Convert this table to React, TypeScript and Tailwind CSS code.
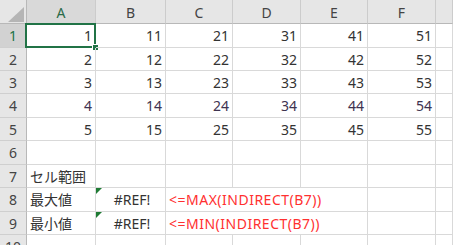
import type { ReactNode } from "react";

const COLS = ["A", "B", "C", "D", "E", "F", ""];
const GRID = "grid grid-cols-[27px_69px_70px_67px_68px_67px_68px_1fr]";
const FONT = "font-['Noto_Sans','Noto_Sans_CJK_JP',sans-serif]";

type Row = { n: number; h: string; vals?: (number | null)[]; purple?: boolean };

const ROWS: Row[] = [
  { n: 1, h: "h-[24px]", vals: [1, 11, 21, 31, 41, 51] },
  { n: 2, h: "h-[23px]", vals: [2, 12, 22, 32, 42, 52] },
  { n: 3, h: "h-[23px]", vals: [3, 13, 23, 33, 43, 53] },
  { n: 4, h: "h-[24px]", vals: [4, 14, 24, 34, 44, 54], purple: true },
  { n: 5, h: "h-[23px]", vals: [5, 15, 25, 35, 45, 55] },
  { n: 6, h: "h-[24px]" },
];

function RowHead({ n, active }: { n: number; active?: boolean }) {
  return (
    <div
      className={`flex items-center justify-center border-r border-b border-r-[#b8b8b8] border-b-[#cfcfcf] ${
        active ? "bg-[#d2d2d2] text-[#217346]" : "bg-[#e6e6e6] text-[#444]"
      }`}
    >
      {n}
    </div>
  );
}

function Cell({ children, right, className = "" }: { children?: ReactNode; right?: boolean; className?: string }) {
  return (
    <div
      className={`relative flex items-center whitespace-nowrap border-r border-b border-[#d9d9d9] ${
        right ? "justify-end pr-[3px]" : "pl-[3px]"
      } ${className}`}
    >
      {children}
    </div>
  );
}

function ErrorFlag() {
  return <span className="absolute left-0 top-0 h-0 w-0 border-t-[6px] border-r-[6px] border-t-[#1e7b34] border-r-transparent" />;
}

export default function App() {
  return (
    <div className={`h-[245px] w-[453px] overflow-hidden bg-white text-[14px] text-[#333] ${FONT}`}>
      {/* column headers */}
      <div className={`${GRID} h-[24px]`}>
        <div className="relative border-r border-b border-r-[#b8b8b8] border-b-[#b8b8b8] bg-[#e6e6e6]">
          <svg className="absolute left-[8px] top-[7px]" width="16" height="15" viewBox="0 0 16 15">
            <polygon points="16,0 16,15 0,15" fill="#b5b5b5" />
          </svg>
        </div>
        {COLS.map((c, i) => (
          <div
            key={i}
            className={`flex items-center justify-center border-r border-b border-r-[#cccccc] border-b-[#b8b8b8] pt-[2px] ${
              c === "A" ? "bg-[#d9d9d9] text-[#2a6b48]" : "bg-[#e6e6e6] text-[#444]"
            }`}
          >
            {c}
          </div>
        ))}
      </div>

      {ROWS.map((r) => (
        <div key={r.n} className={`${GRID} ${r.h}`}>
          <RowHead n={r.n} active={r.n === 1} />
          {Array.from({ length: 7 }).map((_, i) => {
            const v = r.vals?.[i];
            return (
              <Cell key={i} right className={r.purple ? "text-[#3e3350]" : ""}>
                {v ?? null}
                {r.n === 1 && i === 0 ? (
                  <>
                    <span className="absolute -left-[2px] -top-[1px] -right-[1px] -bottom-[1px] border-2 border-[#217346]" />
                    <span className="absolute -right-[4px] -bottom-[4px] h-[7px] w-[7px] border border-white bg-[#217346]" />
                  </>
                ) : null}
              </Cell>
            );
          })}
        </div>
      ))}

      <div className={`${GRID} h-[23px]`}>
        <RowHead n={7} />
        <Cell>セル範囲</Cell>
        {Array.from({ length: 6 }).map((_, i) => (
          <Cell key={i} />
        ))}
      </div>

      {[
        { n: 8, h: "h-[24px]", label: "最大値", f: "<=MAX(INDIRECT(B7))" },
        { n: 9, h: "h-[23px]", label: "最小値", f: "<=MIN(INDIRECT(B7))" },
      ].map((r) => (
        <div key={r.n} className={`${GRID} ${r.h}`}>
          <RowHead n={r.n} />
          <Cell>{r.label}</Cell>
          <Cell className="justify-center pl-0">
            <ErrorFlag />
            #REF!
          </Cell>
          <Cell className="col-span-3 pl-[2px] tracking-[0.5px] text-[#ff3030]">{r.f}</Cell>
          <Cell />
          <Cell />
        </div>
      ))}

      <div className={`${GRID} h-[24px]`}>
        <RowHead n={10} />
        {Array.from({ length: 7 }).map((_, i) => (
          <Cell key={i} />
        ))}
      </div>
    </div>
  );
}
